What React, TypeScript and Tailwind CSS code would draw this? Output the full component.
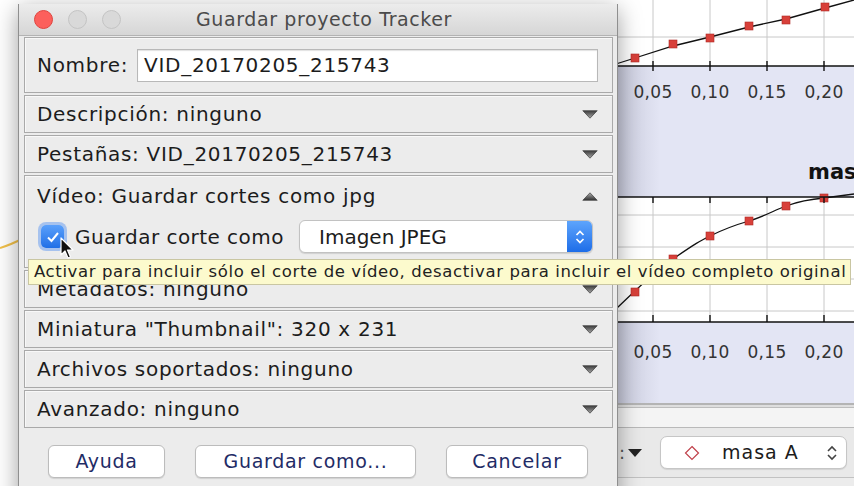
import React from "react";

function Tri({ up = false }: { up?: boolean }) {
  const id = up ? "triUp" : "triDown";
  return (
    <svg width="16" height="9" viewBox="0 0 16 9" className="shrink-0">
      <defs>
        <linearGradient id={id} x1="0" y1="0" x2="0" y2="1">
          <stop offset="0" stopColor={up ? "#b0b0b0" : "#3a3a3a"} />
          <stop offset="1" stopColor={up ? "#2e2e2e" : "#a8a8a8"} />
        </linearGradient>
      </defs>
      <polygon
        points={up ? "8,0.8 15.2,8.3 0.8,8.3" : "0.8,0.7 15.2,0.7 8,8.2"}
        fill={`url(#${id})`}
        stroke="#4a4a4a"
        strokeWidth="0.8"
        strokeLinejoin="round"
      />
    </svg>
  );
}

function Section({ label, className }: { label: string; className: string }) {
  return (
    <div
      className={
        "flex items-center justify-between border border-[#a9a9a9] pl-3 pr-[14px] shadow-[inset_1px_1px_0_#f8f8f8] " +
        className
      }
    >
      <span className="whitespace-pre">{label}</span>
      <Tri />
    </div>
  );
}

function MacButton({ label, className }: { label: string; className: string }) {
  return (
    <div
      className={
        "flex h-[33px] items-center justify-center rounded-[6px] border border-[#bcbcbc] bg-white text-[#1f2c66] shadow-[0_1px_1px_rgba(0,0,0,0.12)] " +
        className
      }
    >
      {label}
    </div>
  );
}

function ChartView() {
  const xs = [653, 710, 767, 824];
  const ticks = ["0,05", "0,10", "0,15", "0,20"];
  const p1 = [
    [635, 58],
    [673, 44],
    [710, 38],
    [749, 26],
    [786, 20],
    [825, 7],
  ];
  const p2 = [
    [635, 292],
    [673, 259],
    [710, 236],
    [749, 221],
    [786, 206],
    [824, 198],
  ];
  return (
    <svg width="264" height="403" viewBox="590 0 264 403" className="block shrink-0">
      <defs>
        <linearGradient id="lavShade" x1="590" y1="0" x2="660" y2="0" gradientUnits="userSpaceOnUse">
          <stop offset="0" stopColor="#b4b7ca" />
          <stop offset="0.4" stopColor="#c9cbdc" />
          <stop offset="1" stopColor="#e3e5f4" />
        </linearGradient>
      </defs>
      <rect x="590" y="0" width="264" height="403" fill="url(#lavShade)" />
      {/* upper plot */}
      <rect x="590" y="0" width="264" height="66" fill="#ffffff" />
      {xs.map((x) => (
        <line key={"g1" + x} x1={x} y1="0" x2={x} y2="66" stroke="#c8c8c8" strokeWidth="1" />
      ))}
      <line x1="590" y1="37" x2="854" y2="37" stroke="#c8c8c8" strokeWidth="1" />
      <polyline points="600,69 635,58 673,46 710,37 749,27 786,19 825,8 854,0" fill="none" stroke="#111" strokeWidth="1.3" />
      {p1.map(([x, y]) => (
        <rect key={"a" + x} x={x - 4} y={y - 4} width="8" height="8" fill="#d8403a" stroke="#b02a25" strokeWidth="0.6" />
      ))}
      <line x1="590" y1="66" x2="854" y2="66" stroke="#111" strokeWidth="1.4" />
      {xs.map((x) => (
        <line key={"t1" + x} x1={x} y1="61" x2={x} y2="71" stroke="#111" strokeWidth="1.4" />
      ))}
      {xs.map((x, i) => (
        <text key={"l1" + x} x={x} y="98" textAnchor="middle" fontSize="17" fill="#333" fontFamily="DejaVu Sans" letterSpacing="0.3">
          {ticks[i]}
        </text>
      ))}
      <text x="808" y="179" fontSize="21" fontWeight="bold" fill="#111" fontFamily="DejaVu Sans">
        masa A
      </text>
      {/* lower plot */}
      <rect x="590" y="197" width="264" height="125" fill="#ffffff" />
      {xs.map((x) => (
        <line key={"g2" + x} x1={x} y1="197" x2={x} y2="322" stroke="#c8c8c8" strokeWidth="1" />
      ))}
      {[215, 247, 279, 311].map((y) => (
        <line key={"h2" + y} x1="590" y1={y} x2="854" y2={y} stroke="#c8c8c8" strokeWidth="1" />
      ))}
      <path
        d="M600,322 L617,308 C630,296 650,275 673,259 S700,241 710,236 S735,225 749,221 S775,210 786,206 S812,199 824,198 L854,194"
        fill="none"
        stroke="#111"
        strokeWidth="1.3"
      />
      {p2.map(([x, y]) => (
        <rect key={"b" + x} x={x - 4} y={y - 4} width="8" height="8" fill="#d8403a" stroke="#b02a25" strokeWidth="0.6" />
      ))}
      <line x1="590" y1="197" x2="854" y2="197" stroke="#111" strokeWidth="1.4" />
      {xs.map((x) => (
        <line key={"t2" + x} x1={x} y1="197" x2={x} y2="203" stroke="#111" strokeWidth="1.4" />
      ))}
      <line x1="590" y1="322" x2="854" y2="322" stroke="#111" strokeWidth="1.4" />
      {xs.map((x) => (
        <line key={"t3" + x} x1={x} y1="315" x2={x} y2="322" stroke="#111" strokeWidth="1.4" />
      ))}
      {xs.map((x, i) => (
        <text key={"l2" + x} x={x} y="358" textAnchor="middle" fontSize="17" fill="#333" fontFamily="DejaVu Sans" letterSpacing="0.3">
          {ticks[i]}
        </text>
      ))}
    </svg>
  );
}

export default function App() {
  return (
    <div className="relative h-[486px] w-[854px] overflow-hidden bg-white font-['DejaVu_Sans','Liberation_Sans',sans-serif] text-[#1c1c1c]">
      {/* plot window behind the dialog */}
      <div className="absolute left-[590px] top-0 flex h-[486px] w-[264px] flex-col bg-[#ececec]">
        <ChartView />
        <div className="h-[2px] bg-[#b4b4b4]" />
        <div className="h-[2px] bg-[#dedede]" />
        <div className="h-[1px] bg-[#bdbdbd]" />
        <div className="h-[19px] bg-[#f4f4f4]" />
        <div className="h-[1px] bg-[#b9b9b9]" />
        <div className="flex h-[49px] items-center bg-[#e9e9e9] pl-[29px]">
          <span className="w-[9px] text-[18px] text-[#555]">:</span>
          <svg width="14" height="8" viewBox="0 0 14 8" className="shrink-0">
            <polygon points="0,0 14,0 7,8" fill="#222" />
          </svg>
          <div className="ml-[18px] flex h-[33px] w-[187px] items-center rounded-[7px] border border-[#c6c6c6] bg-white pl-[23px] pr-[8px] shadow-[0_1px_1px_rgba(0,0,0,0.1)]">
            <svg width="16" height="16" viewBox="0 0 16 16" className="shrink-0">
              <polygon points="8,1.5 14.5,8 8,14.5 1.5,8" fill="none" stroke="#c0404a" strokeWidth="1.2" />
            </svg>
            <span className="ml-[22px] text-[19px] tracking-[1px] text-[#1c1c1c]">masa A</span>
            <svg width="12" height="18" viewBox="0 0 12 18" className="ml-auto shrink-0">
              <polyline points="2,7 6,3 10,7" fill="none" stroke="#444" strokeWidth="1.6" />
              <polyline points="2,11 6,15 10,11" fill="none" stroke="#444" strokeWidth="1.6" />
            </svg>
          </div>
        </div>
        <div className="h-[1px] bg-[#c2c2c2]" />
        <div className="flex-1 bg-[#ececec]" />
      </div>

      {/* curve peeking out on the left */}
      <svg width="30" height="30" viewBox="0 0 30 30" className="absolute left-0 top-[225px]">
        <path d="M0,23 Q10,20 24,13" fill="none" stroke="#f2c14a" strokeWidth="2" />
      </svg>

      {/* dialog window */}
      <div className="absolute left-[18px] top-[4px] flex h-[500px] w-[600px] flex-col border-x border-[#8f8f8f] bg-[#ececec] text-[20px] tracking-[0.7px] shadow-[0_6px_22px_rgba(0,0,0,0.38)]">
        {/* title bar */}
        <div className="relative flex h-[32px] shrink-0 items-center justify-center border-b border-[#b3b3b3] bg-gradient-to-b from-[#ececec] to-[#d6d6d6]">
          <div className="absolute left-[15px] top-[6px] flex gap-[15px]">
            <div className="h-[19px] w-[19px] rounded-full border border-[#e0443e] bg-[#fc605c]" />
            <div className="h-[19px] w-[19px] rounded-full border border-[#c4c4c4] bg-[#d9d9d9]" />
            <div className="h-[19px] w-[19px] rounded-full border border-[#c4c4c4] bg-[#d9d9d9]" />
          </div>
          <span className="pl-[12px] text-[19px] tracking-[0.6px] text-[#4b4b4b]">Guardar proyecto Tracker</span>
        </div>

        {/* body */}
        <div className="flex flex-col gap-[2px] pl-[5px] pr-[4px] pt-[1px]">
          <div className="flex h-[56px] items-center border border-[#a9a9a9] pl-3 pr-[14px] shadow-[inset_1px_1px_0_#f8f8f8]">
            <span>Nombre:</span>
            <div className="ml-[9px] flex h-[33px] flex-1 items-center border border-[#b8b8b8] bg-white pl-[6px] shadow-[inset_0_1px_1px_rgba(0,0,0,0.12)]">
              VID_20170205_215743
            </div>
          </div>
          <Section label="Descripción: ninguno" className="h-[38px]" />
          <Section label="Pestañas: VID_20170205_215743" className="h-[38px]" />
          <div className="flex h-[93px] flex-col border border-[#a9a9a9] pl-3 pr-[14px] shadow-[inset_1px_1px_0_#f8f8f8]">
            <div className="flex h-[40px] items-center justify-between">
              <span>Vídeo: Guardar cortes como jpg</span>
              <Tri up />
            </div>
            <div className="mt-[4px] flex h-[33px] items-center">
              <div className="ml-[4px] flex h-[23px] w-[23px] shrink-0 items-center justify-center rounded-[5px] bg-gradient-to-b from-[#5aa0fb] to-[#1f6fe6] shadow-[0_0_0_3px_rgba(110,160,240,0.55)]">
                <svg width="14" height="12" viewBox="0 0 14 12">
                  <polyline points="2,6.5 5.5,10 12,2" fill="none" stroke="#fff" strokeWidth="2" />
                </svg>
              </div>
              <span className="ml-[11px] tracking-[0.45px]">Guardar corte como</span>
              <div className="ml-auto mr-[5px] flex h-[33px] w-[294px] items-center rounded-[6px] border border-[#c2c2c2] bg-white pl-[19px] tracking-normal shadow-[0_1px_1px_rgba(0,0,0,0.12)]">
                <span>Imagen JPEG</span>
                <div className="ml-auto flex h-[31px] w-[25px] items-center justify-center rounded-r-[5px] bg-gradient-to-b from-[#5da4fc] to-[#1d6de8]">
                  <svg width="12" height="20" viewBox="0 0 12 20">
                    <polyline points="2.5,8 6,4.5 9.5,8" fill="none" stroke="#fff" strokeWidth="1.7" />
                    <polyline points="2.5,12 6,15.5 9.5,12" fill="none" stroke="#fff" strokeWidth="1.7" />
                  </svg>
                </div>
              </div>
            </div>
          </div>
          <Section label="Metadatos: ninguno" className="h-[38px]" />
          <Section label='Miniatura "Thumbnail": 320 x 231' className="h-[38px]" />
          <Section label="Archivos soportados: ninguno" className="h-[38px]" />
          <Section label="Avanzado: ninguno" className="h-[38px]" />
        </div>

        {/* buttons */}
        <div className="ml-[29px] mt-[17px] flex gap-[30px] text-[19px]">
          <MacButton label="Ayuda" className="w-[117px]" />
          <MacButton label="Guardar como..." className="w-[221px]" />
          <MacButton label="Cancelar" className="w-[142px]" />
        </div>
      </div>

      {/* tooltip */}
      <div className="absolute left-[28px] top-[259px] flex h-[26px] w-[823px] items-center whitespace-nowrap border border-[#c9c6a2] bg-[#fcfacd] pl-[5px] text-[16.5px] tracking-[0.62px] text-[#222]">
        Activar para incluir sólo el corte de vídeo, desactivar para incluir el vídeo completo original
      </div>

      {/* mouse pointer */}
      <svg width="16" height="24" viewBox="0 0 16 24" className="absolute left-[60px] top-[237px]">
        <path d="M1,1 L1,18 L5,14 L8,21 L10.5,20 L7.5,13 L13,13 Z" fill="#111" stroke="#fff" strokeWidth="1.2" strokeLinejoin="round" />
      </svg>
    </div>
  );
}
